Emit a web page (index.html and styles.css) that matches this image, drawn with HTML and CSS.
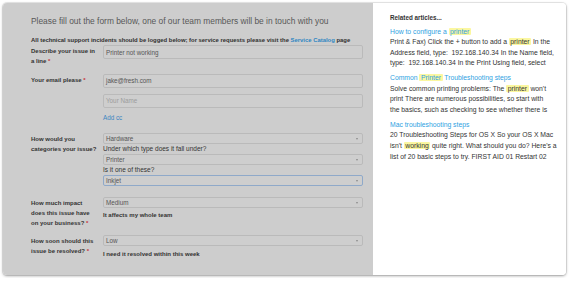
FILE: index.html
```html
<!DOCTYPE html>
<html lang="en">
<head>
<meta charset="utf-8">
<title>New ticket</title>
<link rel="stylesheet" href="styles.css">
</head>
<body>
<div class="card">
  <section class="form-pane">
    <h1 class="title">Please fill out the form below, one of our team members will be in touch with you</h1>
    <p class="notice">All technical support incidents should be logged below; for service requests please visit the <a class="link">Service Catalog</a> page</p>

    <div class="row">
      <label class="label">Describe your issue in<br>a line <span class="req">*</span></label>
      <div class="field">
        <div class="input">Printer not working</div>
      </div>
    </div>

    <div class="row">
      <label class="label">Your email please <span class="req">*</span></label>
      <div class="field">
        <div class="input">jake@fresh.com</div>
        <div class="input placeholder stacked">Your Name</div>
        <a class="addcc">Add cc</a>
      </div>
    </div>

    <div class="row row-wide">
      <label class="label">How would you<br>categories your issue?</label>
      <div class="field">
        <div class="select">Hardware</div>
        <div class="sub">Under which type does it fall under?</div>
        <div class="select">Printer</div>
        <div class="sub">Is it one of these?</div>
        <div class="select focus">Inkjet</div>
      </div>
    </div>

    <div class="row">
      <label class="label">How much impact<br>does this issue have<br>on your business? <span class="req">*</span></label>
      <div class="field">
        <div class="select">Medium</div>
        <div class="note">It affects my whole team</div>
      </div>
    </div>

    <div class="row">
      <label class="label">How soon should this<br>issue be resolved? <span class="req">*</span></label>
      <div class="field">
        <div class="select">Low</div>
        <div class="note">I need it resolved within this week</div>
      </div>
    </div>
  </section>

  <aside class="side">
    <div class="side-head">Related articles...</div>

    <article class="article">
      <a class="article-title">How to configure a <mark>printer</mark></a>
      <p class="article-body">
        <span class="ln">Print &amp; Fax) Click the + button to add a <mark>printer</mark> In the</span>
        <span class="ln">Address field, type:&nbsp; 192.168.140.34 In the Name field,</span>
        <span class="ln">type:&nbsp; 192.168.140.34 In the Print Using field, select</span>
      </p>
    </article>

    <article class="article">
      <a class="article-title">Common <mark>Printer</mark> Troubleshooting steps</a>
      <p class="article-body">
        <span class="ln">Solve common printing problems: The <mark>printer</mark> won't</span>
        <span class="ln">print There are numerous possibilities, so start with</span>
        <span class="ln">the basics, such as checking to see whether there is</span>
      </p>
    </article>

    <article class="article">
      <a class="article-title">Mac troubleshooting steps</a>
      <p class="article-body">
        <span class="ln">20 Troubleshooting Steps for OS X So your OS X Mac</span>
        <span class="ln">isn't <mark>working</mark> quite right. What should you do? Here's a</span>
        <span class="ln">list of 20 basic steps to try. FIRST AID 01 Restart 02</span>
      </p>
    </article>
  </aside>
</div>
</body>
</html>
```

FILE: styles.css
```css
* { box-sizing: border-box; }

body {
  margin: 0;
  background: #ffffff;
  font-family: "Liberation Sans", Arial, sans-serif;
}

.card {
  margin: 3px;
  width: 563px;
  height: 272px;
  display: flex;
  border-radius: 4px;
  overflow: hidden;
  box-shadow: 0 1px 3px rgba(0, 0, 0, 0.35), 0 0 0 1px rgba(0, 0, 0, 0.07);
}

/* ---------- left: dimmed form ---------- */
.form-pane {
  width: 370px;
  flex: none;
  padding: 13px 0 0 28px;
  background: #cdcdcd;
}

.title {
  margin: 0 0 8.5px;
  font-size: 8.4px;
  line-height: 11px;
  font-weight: normal;
  color: #585858;
  white-space: nowrap;
  font-variant-ligatures: none;
}

.notice {
  margin: 0 0 1.5px;
  font-size: 5.9px;
  line-height: 8px;
  font-weight: bold;
  color: #2f2f2f;
  white-space: nowrap;
}

.link { color: #2f86c2; }

.row {
  display: grid;
  grid-template-columns: 72px 260px;
  margin-bottom: 7.5px;
}
.row-wide { margin-bottom: 11px; }

.label {
  padding-top: 1px;
  font-size: 6px;
  line-height: 10px;
  font-weight: bold;
  color: #333333;
  white-space: nowrap;
}

.req { color: #c8333a; }

.field { display: flex; flex-direction: column; }

.input,
.select {
  display: flex;
  align-items: center;
  padding: 0 2px;
  border: 1px solid #bababa;
  border-radius: 2px;
  background: #cecece;
  font-size: 6.3px;
  color: #555555;
  white-space: nowrap;
}

.input { height: 14px; }
.placeholder { color: #9c9c9c; }
.stacked { margin-top: 6px; }

.addcc {
  margin: 5.5px 0 2px;
  font-size: 6.3px;
  line-height: 10px;
  color: #3b86c2;
}

.select {
  position: relative;
  height: 11px;
}
.select::after {
  content: "";
  position: absolute;
  right: 4px;
  top: 4px;
  border-left: 1.6px solid transparent;
  border-right: 1.6px solid transparent;
  border-top: 2px solid #8a8a8a;
}
.select.focus { border-color: #8fa9c9; }

.sub {
  font-size: 6.5px;
  line-height: 10px;
  color: #333333;
  white-space: nowrap;
}

.note {
  margin-top: 2.5px;
  font-size: 6px;
  line-height: 10px;
  font-weight: bold;
  color: #333333;
  white-space: nowrap;
}

/* ---------- right: related articles ---------- */
.side {
  flex: 1;
  padding: 11px 8px 0 17px;
  background: #ffffff;
}

.side-head {
  margin-bottom: 3.5px;
  font-size: 6.3px;
  line-height: 8px;
  font-weight: bold;
  color: #333333;
}

.article { margin-bottom: 3px; }

.article-title {
  display: block;
  font-size: 6.8px;
  line-height: 11.5px;
  color: #2f9fe2;
  white-space: nowrap;
}

.article-body {
  margin: 0;
  font-size: 6.8px;
  line-height: 10.7px;
  color: #333333;
}

.ln { display: block; white-space: nowrap; }

mark {
  padding: 0 1.5px;
  border-radius: 1px;
  background: #fbf7a0;
  color: inherit;
}
```
